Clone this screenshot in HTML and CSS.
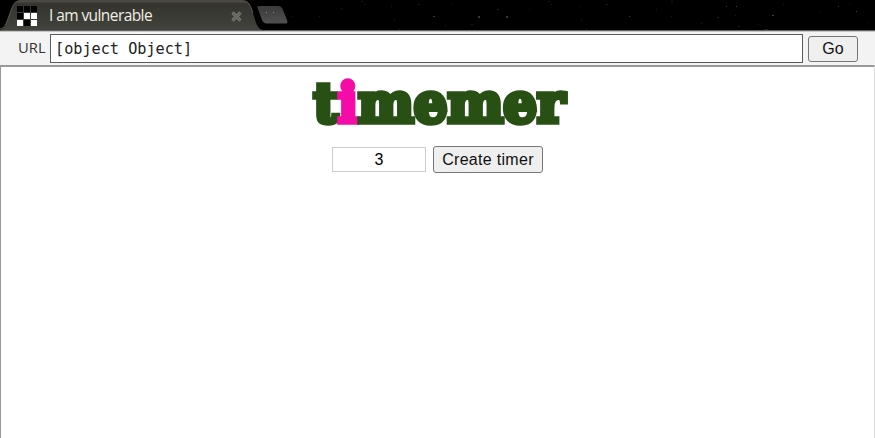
FILE: index.html
```html
<!DOCTYPE html>
<html lang="en">
<head>
<meta charset="utf-8">
<title>I am vulnerable</title>
<link rel="stylesheet" href="styles.css">
</head>
<body>
<header class="tabs">
  <svg class="tab-shape" width="875" height="32" viewBox="0 0 875 32" aria-hidden="true">
    <defs>
      <linearGradient id="tab" x1="0" y1="0" x2="0" y2="1"><stop offset="0" stop-color="#4d4c46"/><stop offset=".1" stop-color="#34332e"/><stop offset="1" stop-color="#42433c"/></linearGradient>
      <linearGradient id="add" x1="0" y1="0" x2="0" y2="1"><stop offset="0" stop-color="#3b3b3b"/><stop offset="1" stop-color="#505050"/></linearGradient>
    </defs>
    <path d="M0 30C5 29 6 24 9 16C13 5 14 1 20 1H243C249 1 250 5 253 13C256 22 257 29 263 30Z" fill="url(#tab)"/>
    <path d="M0 29C5 28 6 24 9 16C13 5 14 1 20 .7H243C249 1 250 5 253 13" fill="none" stroke="#5b5a54"/>
    <path d="M259 6H277C281 6 282 7 283 10L287 20C288 23 287 23.5 284 23.5H267C264 23.5 263 22 262 20L258 9C257 7 257 6 259 6Z" fill="url(#add)"/>
    <path d="M266 12h1v1h-1zM273 12h1v1h-1z" fill="#898989"/>
    <g fill="#1c1c1c">
      <path d="M291 16h1v1h-1zM319 16h1v1h-1zM341 8h1v1h-1zM361 1h2v1h-2zM364 4h1v1h-1zM391 6h1v1h-1zM394 19h1v1h-1zM418 4h2v1h-2zM445 25h1v1h-1zM451 4h1v1h-1zM471 24h2v1h-2zM497 9h2v1h-2zM529 9h1v1h-1zM548 1h2v1h-2zM551 4h1v1h-1zM579 6h1v1h-1zM581 19h1v1h-1zM606 4h2v1h-2zM656 9h1v1h-1zM671 1h2v1h-2zM671 16h1v1h-1zM701 23h1v1h-1zM717 17h2v1h-2zM735 15h1v1h-1zM738 26h2v1h-2zM758 24h1v1h-1zM783 4h1v1h-1zM820 11h1v1h-1zM849 3h1v1h-1zM868 22h1v1h-1zM399 29h1v1h-1zM586 29h1v1h-1zM764 29h4v1h-4z"/>
      <path fill="#3a3a3a" d="M433 16h2v1h-2zM478 16h2v2h-2zM506 16h2v2h-2zM629 16h1v1h-1zM726 6h1v1h-1zM736 6h1v1h-1zM772 15h2v1h-2zM838 6h1v1h-1zM856 11h1v1h-1z"/>
    </g>
    <path fill="#626262" d="M0 30h875v1H0z"/><path fill="#c4c4c4" d="M0 31h875v1H0z"/>
  </svg>
  <div class="tab">
    <svg class="favicon" width="21" height="21" viewBox="0 0 21 21" aria-hidden="true">
      <path fill="#000" d="M0 0h6v6H0zM7 0h6v6H7zM14 0h6v6h-6zM0 7h6v6H0zM7 14h6v6H7z"/>
      <path fill="#fff" d="M7 7h6v6H7zM14 7h6v6h-6zM0 14h6v6H0zM14 14h6v6h-6z"/>
    </svg>
    <span class="tab-title">I am vulnerable</span>
    <svg class="close" width="11" height="11" viewBox="0 0 11 11" aria-label="Close"><path d="M1.5 1.5l8 8M9.5 1.5l-8 8" stroke="#77786f" stroke-width="3.2"/><path d="M2 2l7 7M9 2l-7 7" stroke="#62635d" stroke-width="1.5"/></svg>
  </div>
</header>
<div class="bar">
  <label for="url">URL</label>
  <input id="url" class="url" value="[object Object]">
  <button class="go">Go</button>
</div>
<main class="page">
  <svg class="logo" width="270" height="60" role="img" aria-label="timemer">
    <text transform="translate(8.5 49.3) scale(1.036 1.06)" x="0" y="0"><tspan>t</tspan><tspan class="pink">i</tspan><tspan>memer</tspan></text>
  </svg>
  <div class="form">
    <input class="seconds" aria-label="Seconds" value="3">
    <button class="create">Create timer</button>
  </div>
</main>
</body>
</html>
```
FILE: styles.css
```css
* { box-sizing: border-box; }
body { margin: 0; height: 438px; overflow: hidden; display: flex; flex-direction: column; background: #fff; font-family: "Liberation Sans", sans-serif; }
.tabs { position: relative; height: 32px; flex: none; background: #000; }
.tab-shape { position: absolute; left: 0; top: 0; }
.tab { position: relative; display: flex; align-items: flex-start; width: 242px; padding: 5px 0 0 17px; }
.favicon { margin-top: 1px; }
.tab-title { margin-left: 11px; color: #f0ede4; font: 15.5px/21px "Open Sans", sans-serif; letter-spacing: -.58px; white-space: nowrap; }
.close { margin: 6px 0 0 auto; }
.bar { display: flex; flex: none; height: 33px; padding: 2px 17px 2px 18px; background: #f3f3f3; }
.bar label { width: 32px; font: 14.8px/27px "Open Sans", sans-serif; color: #333; }
.url { width: 753px; height: 29px; padding: 0 4px; border: 1px solid #5c5c5c; border-radius: 0; background: #fff; color: #222; font: 15.2px "DejaVu Sans Mono", monospace; }
button { padding: 0; border: 1px solid #767676; border-radius: 3px; background: #efefef; color: #111; font: 16px "Liberation Sans", sans-serif; }
.go { width: 50px; height: 26px; margin: 2px 0 0 5px; }
.page { display: flex; flex: 1; flex-direction: column; align-items: center; border: 1px solid #ddd; border-top: 2px solid #999; border-left-color: #999; border-bottom: 0; }
.logo { margin: 6px 0 0 5px; overflow: visible; }
.logo text { font: bold 51px "DejaVu Serif", serif; fill: #285014; stroke: #285014; stroke-width: 5px; }
.logo .pink { fill: #f50ca8; stroke: #f50ca8; }
.form { display: flex; align-items: center; gap: 7px; margin-top: 13px; }
.seconds { width: 94px; height: 25px; padding: 0; border: 1px solid #ccc; text-align: center; font: 16px "Liberation Sans", sans-serif; }
.create { width: 110px; height: 27px; letter-spacing: .3px; }
```
